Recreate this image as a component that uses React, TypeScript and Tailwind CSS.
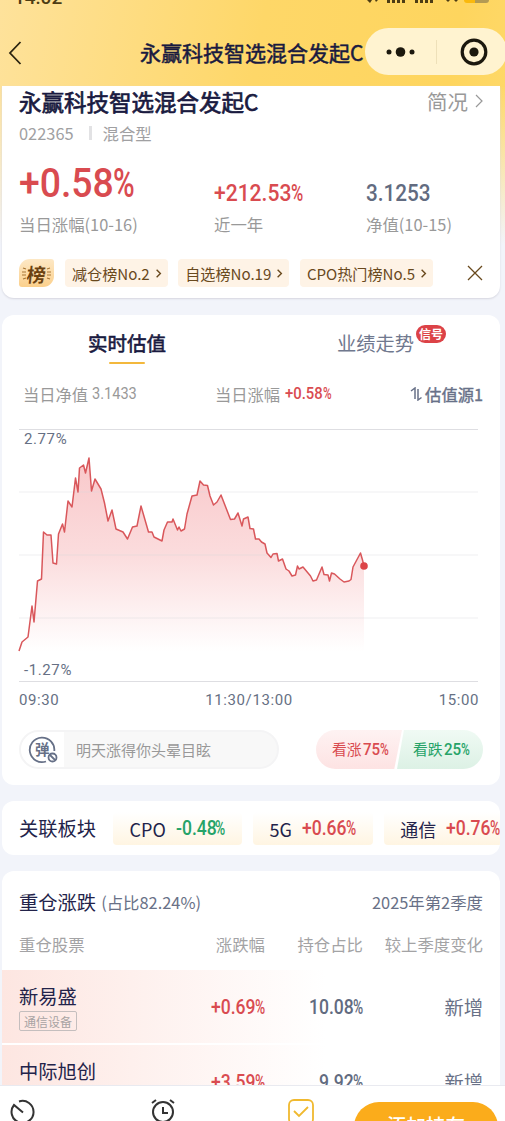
import type { ReactNode } from 'react'

const RED = 'text-[#d94b50]'
const GREEN = 'text-[#26a368]'
const SLATE = 'text-[#626b80]'

// Roboto advances, in em
const advances: Record<string, number> = { '.': 0.275, '+': 0.56, '-': 0.3, '%': 0.73 }

function Squeezed({ text, size, ratio, className = '' }: { text: string; size: number; ratio: number; className?: string }) {
  const natural = [...text].reduce((sum, c) => sum + (advances[c] ?? 0.5615), 0)
  return (
    <span className="inline-block" style={{ width: natural * size * ratio }}>
      <span className={`inline-block origin-left ${className}`} style={{ transform: `scaleX(${ratio})` }}>
        {text}
      </span>
    </span>
  )
}

function Num({ value, size, className = '' }: { value: string; size: number; className?: string }) {
  const percent = value.endsWith('%')
  const digits = percent ? value.slice(0, -1) : value
  return (
    <span
      className={`inline-flex whitespace-nowrap font-['Roboto',sans-serif] leading-none font-medium ${className}`}
      style={{ fontSize: size }}
    >
      <Squeezed text={digits} size={size} ratio={0.9} />
      {percent && <Squeezed text="%" size={size} ratio={0.71} />}
    </span>
  )
}

function Chevron({ className = '' }: { className?: string }) {
  return (
    <svg viewBox="0 0 8 14" fill="none" stroke="currentColor" className={className}>
      <path d="M1 1l6 6-6 6" />
    </svg>
  )
}

function StatusBar() {
  return (
    <div className="flex h-[6px] items-end justify-between overflow-hidden pr-[15px] pb-[2px] pl-[14px] text-[#4d3c14]">
      <span className="font-['Roboto',sans-serif] text-[19px] leading-[13px] font-medium">14:02</span>
      <svg width="124" height="6" viewBox="0 0 124 6" fill="currentColor" className="self-start">
        <path d="M1 0l3 3 2-3M9 0l1 2 2-2z" />
        <path d="M21 0h3v3h-3zM26 0h3v3h-3zM31 0h3v3h-3zM36 0h3v3h-3z" />
        <path d="M49 0h3v3h-3zM54 0h3v3h-3zM59 0h3v3h-3zM64 0h3v3h-3z" />
        <path d="M80 0l2 2 2-2zM88 0l2 2 2-2z" />
        <path d="M98 0h11v3h-8q-3 0-3-3z" fill="#fab90c" />
        <path d="M109 0h14q0 3-3 3h-11z" fill="#b39a54" />
      </svg>
    </div>
  )
}

function Header() {
  return (
    <header className="flex h-[80px] shrink-0 items-start">
      <svg width="14" height="24" viewBox="0 0 14 24" fill="none" stroke="#2b2410" strokeWidth="1.8" className="mt-[35px] ml-[8px] shrink-0">
        <path d="M12.500 1L2 12l10.500 11" />
      </svg>
      <h1 className="mt-[31px] ml-[118px] w-[225px] shrink-0 text-[21px] leading-[30px] whitespace-nowrap text-[#191a40] [-webkit-text-stroke:0.5px_#191a40]">
        永赢科技智选混合发起C
      </h1>
      <div className="mt-[22px] flex h-[47px] w-[142px] shrink-0 items-center rounded-full bg-[#fff3d0]">
        <svg width="142" height="47" viewBox="0 0 142 47" fill="#1c180d">
          <circle cx="24" cy="24" r="2.500" />
          <circle cx="35.500" cy="24" r="4.800" />
          <circle cx="47" cy="24" r="2.500" />
          <path d="M71.500 12v24" stroke="#eee0b9" />
          <circle cx="109" cy="24" r="11.800" fill="none" stroke="#1c180d" strokeWidth="3.200" />
          <circle cx="109" cy="24" r="4.600" />
        </svg>
      </div>
    </header>
  )
}

function RankTag({ children }: { children: ReactNode }) {
  return (
    <span className="flex h-[28px] items-center gap-[6px] rounded-[4px] bg-[#fef3e6] px-[7px] text-[15.100px] leading-[24px] whitespace-nowrap text-[#69491d]">
      {children}
      <Chevron className="h-[9px] w-[5px] overflow-visible stroke-[2.2]" />
    </span>
  )
}

function FundSummary() {
  return (
    <section className="h-[212px] shrink-0 rounded-b-[12px] bg-white px-[17px] shadow-[0_1px_2px_#d5d6df]">
      <div className="flex h-[30px] items-center justify-between">
        <h2 className="text-[22.500px] leading-[30px] text-[#191a40] [-webkit-text-stroke:0.7px_#191a40]">永赢科技智选混合发起C</h2>
        <span className="flex items-center gap-[7px] text-[20.500px] leading-[30px] text-[#999]">
          简况
          <Chevron className="h-[14px] w-[8px] stroke-[1.2]" />
        </span>
      </div>
      <div className="mt-px flex h-[31px] items-center text-[16.400px] leading-[30px] text-[#a0a0a2]">
        022365
        <span className="mr-[11px] ml-[15px] h-[14px] w-[3px] bg-[#e2e2e4]" />
        混合型
      </div>
      <div className="mt-[2px] flex h-[87px]">
        <div className="flex w-[195px] flex-col">
          <div className="flex h-[62px] items-center pt-[4px]">
            <Num value="+0.58%" size={41.500} className={RED} />
          </div>
          <span className="text-[16.400px] leading-[24px] text-[#999]">当日涨幅(10-16)</span>
        </div>
        <div className="flex w-[152px] flex-col">
          <div className="flex h-[62px] items-center pt-[25px]">
            <Num value="+212.53%" size={23.400} className={RED} />
          </div>
          <span className="text-[16.400px] leading-[24px] text-[#999]">近一年</span>
        </div>
        <div className="flex flex-col">
          <div className="flex h-[62px] items-center pt-[25px]">
            <Num value="3.1253" size={23} className={SLATE} />
          </div>
          <span className="text-[16.400px] leading-[24px] text-[#999]">净值(10-15)</span>
        </div>
      </div>
      <div className="mt-[22px] flex h-[28px] items-center">
        <span className="flex h-[28px] w-[35px] items-center justify-center rounded-tl-[11px] rounded-tr-[3px] rounded-br-[11px] rounded-bl-[3px] bg-linear-to-b from-[#fde8c5] to-[#fbd08c] leading-none font-bold text-[#6b4211]">
          <svg width="5" height="14" viewBox="0 0 5 14" stroke="#a77635" strokeWidth="1.200">
            <path d="M1 2l3 1M0 6h4M0 9h4M1 13l3-1" />
          </svg>
          <span className="-skew-x-6 text-[19px]">榜</span>
          <svg width="5" height="14" viewBox="0 0 5 14" stroke="#a77635" strokeWidth="1.200">
            <path d="M1 3l3-1M1 6h4M1 9h4M1 12l3 1" />
          </svg>
        </span>
        <div className="ml-[11px] flex gap-[10.500px]">
          <RankTag>减仓榜No.2</RankTag>
          <RankTag>自选榜No.19</RankTag>
          <RankTag>CPO热门榜No.5</RankTag>
        </div>
        <svg width="16" height="16" viewBox="0 0 16 16" stroke="#69491d" strokeWidth="1.300" className="ml-auto">
          <path d="M1 1l14 14M15 1L1 15" />
        </svg>
      </div>
    </section>
  )
}

const line =
  '19,651 22,642 28,637 32,606 34,622 37.5,581 41.5,579 43.5,532 47,535 51,535 53,563 56.5,564 58.5,534 62.5,524 64.5,532 68,501 72,507 75.5,478 78,492 79.5,468 83.5,465 85.5,473 89,458 91.5,491 95,479 101,489 104.5,503 108,521 112,510 116,529 123,532 127.5,539 132.5,527 137,526 141,506 148.5,532 152,532 154,537 162,541 164,530 167.5,522 172,522 173,519 177.5,530 179,527 181,531 184.5,529 187,514 192,496 197,495 200,481 203.5,485 207.5,485.5 210,496 213.5,505 217,502 221,495 230.5,519.5 234.5,519 238,513 242,526 243.5,519 248,517 250,528.5 253.5,529 255.5,539 259,539 261.5,542 265,544 267,553 271,557.5 273,554 277,553.5 278.5,561 282.5,559 286,569 289,571 292,576 295.5,575 297.5,566 299,569 303,567 310.5,576 313,581 316.5,580 322,567 324,574.5 328,575 329.5,581 331.5,573 334.5,574 340,579 344,582 349,581 351,579.5 353,567 360.5,553 362.5,560 364,566'

function EstimateChart() {
  return (
    <div className="mt-[18px] font-['Roboto',sans-serif] text-[15px] tracking-[0.6px] text-[#667084]">
      <div className="relative h-[253px]">
        <svg width="464" height="254" viewBox="19 429 464 254" className="overflow-visible">
          <defs>
            <linearGradient id="fade" x1="0" y1="458" x2="0" y2="651" gradientUnits="userSpaceOnUse">
              <stop offset="0" stopColor="#f9c8ca" />
              <stop offset="0.5" stopColor="#fbdcdd" />
              <stop offset="1" stopColor="#ffffff" />
            </linearGradient>
          </defs>
          <polygon points={`${line} 364,651`} fill="url(#fade)" />
          <path d="M19 492h459M19 555h459M19 618h459" stroke="#d8d8de" strokeOpacity="0.4" strokeWidth="1.200" />
          <path d="M19 429.500h459M19 681.500h459" stroke="#dedee2" strokeWidth="1.200" />
          <polyline points={line} fill="none" stroke="#d9575b" strokeWidth="1.500" strokeLinejoin="round" />
          <circle cx="364" cy="566" r="3.800" fill="#dc4448" />
        </svg>
        <span className="absolute top-0 left-[5px] leading-[20px]">2.77%</span>
        <span className="absolute bottom-[2px] left-[5px] leading-[20px]">-1.27%</span>
      </div>
      <div className="mt-[8px] mr-[4px] flex justify-between leading-[20px]">
        <span>09:30</span>
        <span>11:30/13:00</span>
        <span>15:00</span>
      </div>
    </div>
  )
}

function BarrageIcon() {
  return (
    <span className="relative flex h-[28px] w-[30px] items-center text-[#667087]">
      <svg width="30" height="28" viewBox="0 0 30 28" fill="none" stroke="currentColor" strokeWidth="1.800">
        <path d="M18 25.500A12.300 12.300 0 1 1 26.300 15" />
        <circle cx="24.500" cy="21.500" r="4" />
        <path d="M22 19l5 5" />
      </svg>
      <span className="absolute top-[5px] left-[7px] text-[14.500px] leading-[16px] font-bold">弹</span>
    </span>
  )
}

function Estimate() {
  return (
    <section className="mt-[17px] h-[470px] shrink-0 rounded-[12px] bg-white px-[17px]">
      <div className="flex h-[56px] pt-[13px]">
        <div className="ml-[69px] flex w-[78px] flex-col items-center">
          <span className="text-[19.500px] leading-[30px] whitespace-nowrap text-[#191a40] [-webkit-text-stroke:0.6px_#191a40]">实时估值</span>
          <span className="mt-[4px] h-[2px] w-[36px] rounded-full bg-[#f3b83c]" />
        </div>
        <div className="ml-[171px] flex items-start">
          <span className="text-[19.300px] leading-[30px] whitespace-nowrap text-[#70788e]">业绩走势</span>
          <span className="-mt-[3px] ml-[2px] flex h-[18px] w-[30px] items-center justify-center rounded-full bg-[#dc4247] text-[12px] leading-none font-bold text-white">
            信号
          </span>
        </div>
      </div>
      <div className="flex h-[40px] items-center pt-[5px] pl-[4px] text-[16.300px] leading-[24px] text-[#999]">
        <span className="flex w-[192px] items-center gap-[4px]">
          当日净值
          <Num value="3.1433" size={16.200} className="pt-[2px] font-normal" />
        </span>
        <span className="flex items-center gap-[5px]">
          当日涨幅
          <Num value="+0.58%" size={16.500} className={`pt-[2px] ${RED}`} />
        </span>
        <span className="ml-auto flex items-center gap-[3px] text-[#687188] [-webkit-text-stroke:0.4px_#687188]">
          <svg width="12" height="14" viewBox="0 0 12 14" fill="none" stroke="currentColor" strokeWidth="1.500">
            <path d="M1 4l4-3v11M8 2v11l3.500-2.500" />
          </svg>
          估值源1
        </span>
      </div>
      <EstimateChart />
      <div className="mt-[20px] flex h-[39px] items-center justify-between">
        <div className="flex h-[39px] w-[260px] items-center overflow-hidden rounded-full border-2 border-[#f4f4f5] bg-[#f8f8f8]">
          <div className="flex h-full w-[43px] items-center bg-white pl-[7px]">
            <BarrageIcon />
          </div>
          <span className="ml-[12px] text-[15px] leading-[24px] text-[#999]">明天涨得你头晕目眩</span>
        </div>
        <div className="flex h-[39px] w-[167px] overflow-hidden rounded-full text-[14.800px]">
          <div className="flex w-[86px] items-center bg-linear-to-b from-[#fef2f2] to-[#fde3e3] pl-[16px] [clip-path:polygon(0_0,100%_0,91%_100%,0_100%)]">
            <span className="flex items-center gap-px whitespace-nowrap text-[#d94b50]">
              看涨
              <Num value="75%" size={16.800} />
            </span>
          </div>
          <div className="-ml-[5px] flex w-[86px] items-center bg-linear-to-b from-[#f0faf4] to-[#dcf1e5] pl-[16px] [clip-path:polygon(8%_0,100%_0,100%_100%,0_100%)]">
            <span className="flex items-center gap-px whitespace-nowrap text-[#26a368]">
              看跌
              <Num value="25%" size={16.800} />
            </span>
          </div>
        </div>
      </div>
    </section>
  )
}

const sectors = [
  { name: 'CPO', change: '-0.48%', color: GREEN },
  { name: '5G', change: '+0.66%', color: RED },
  { name: '通信', change: '+0.76%', color: RED },
]

function Sectors() {
  return (
    <section className="mt-[16px] flex h-[54px] shrink-0 items-center overflow-hidden rounded-[12px] bg-white pl-[17px]">
      <span className="w-[94px] shrink-0 text-[19.300px] leading-[28px] text-[#23234a]">关联板块</span>
      {sectors.map(({ name, change, color }) => (
        <span
          key={name}
          className="mt-px mr-[11px] flex h-[33px] shrink-0 items-center gap-[10px] rounded-[4px] bg-linear-to-b from-white to-[#fff5e2] px-[16.500px] text-[18px] leading-[28px] text-[#23234a]"
        >
          {name}
          <Num value={change} size={19.500} className={`pt-px ${color}`} />
        </span>
      ))}
    </section>
  )
}

const holdings = [
  { name: '新易盛', sector: '通信设备', change: '+0.69%', share: '10.08%', diff: '新增' },
  { name: '中际旭创', sector: '通信设备', change: '+3.59%', share: '9.92%', diff: '新增' },
]

function Holdings() {
  return (
    <section className="mt-[16px] min-h-0 flex-1 overflow-hidden rounded-t-[12px] bg-white">
      <div className="flex h-[61px] items-center justify-between px-[17px] text-[16.400px] leading-[28px] text-[#697187]">
        <span className="flex items-center gap-[5px]">
          <span className="text-[19.300px] text-[#23234a]">重仓涨跌</span>
          (占比82.24%)
        </span>
        <span>2025年第2季度</span>
      </div>
      <div className="grid h-[38px] grid-cols-[110px_1fr_98px_120px] px-[17px] text-right text-[16.400px] leading-[24px] text-[#a3a3a5]">
        <span className="text-left">重仓股票</span>
        <span>涨跌幅</span>
        <span>持仓占比</span>
        <span>较上季度变化</span>
      </div>
      {holdings.map(({ name, sector, change, share, diff }) => (
        <div
          key={name}
          className="mb-[2px] grid h-[73px] grid-cols-[110px_1fr_98px_120px] items-center justify-items-end bg-linear-to-r from-[#fde6e1] to-white to-65% px-[17px]"
        >
          <div className="flex flex-col items-start justify-self-start pb-px">
            <span className="text-[19.300px] leading-[28px] text-[#23234a]">{name}</span>
            <span className="mt-px h-[20px] rounded-[2px] border border-[#c4bebe] px-[4px] text-[12px] leading-[20px] text-[#a8a3a3]">
              {sector}
            </span>
          </div>
          <Num value={change} size={19.500} className={`pt-[2px] ${RED}`} />
          <Num value={share} size={19.500} className={`pt-[2px] ${SLATE}`} />
          <span className="text-[19.300px] leading-[28px] text-[#697187]">{diff}</span>
        </div>
      ))}
    </section>
  )
}

function BottomBar() {
  return (
    <nav className="flex h-[36px] shrink-0 overflow-hidden border-t border-[#e9eaf0] bg-white">
      <svg width="26" height="26" viewBox="0 0 26 26" fill="none" stroke="#333" strokeWidth="2" className="mt-[13px] ml-[10px] shrink-0">
        <path d="M9 2.500A11 11 0 1 1 4 6l9 7.500" />
      </svg>
      <svg width="26" height="26" viewBox="0 0 26 26" fill="none" stroke="#333" strokeWidth="2" className="mt-[12px] ml-[114px] shrink-0">
        <circle cx="13" cy="14" r="10" />
        <path d="M13 9v6h5M2 5l4-3M24 5l-4-3" />
      </svg>
      <svg width="28" height="28" viewBox="0 0 28 28" fill="none" stroke="#f0b92f" strokeWidth="1.800" className="mt-[12px] ml-[111px] shrink-0">
        <rect x="2" y="2" width="24" height="24" rx="5" />
        <path d="M7 13l5 5 9-9" />
      </svg>
      <div className="mt-[16px] ml-[39px] flex h-[50px] w-[144px] shrink-0 justify-center rounded-full bg-[#fbac1b] pt-[9px] text-[19.500px] leading-[28px] font-medium text-white">
        添加持有
      </div>
    </nav>
  )
}

export default function App() {
  return (
    <div className="flex h-[1121px] w-[505px] flex-col overflow-hidden bg-[#f2f4fa] bg-[linear-gradient(to_bottom,transparent_85px,#f2f4fa_245px),linear-gradient(100deg,#fee29b_0%,#fed768_38%,#fed55e_66%,#fee184_100%)] bg-no-repeat font-['Noto_Sans_CJK_SC',sans-serif] font-normal">
      <StatusBar />
      <Header />
      <main className="mr-[5px] ml-[2px] flex min-h-0 flex-1 flex-col">
        <FundSummary />
        <Estimate />
        <Sectors />
        <Holdings />
      </main>
      <BottomBar />
    </div>
  )
}
